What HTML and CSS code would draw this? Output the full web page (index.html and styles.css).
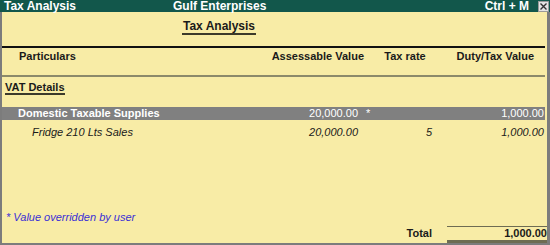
FILE: index.html
```html
<!DOCTYPE html>
<html lang="en">
<head>
  <meta charset="UTF-8">
  <title>Tax Analysis</title>
  <link rel="stylesheet" href="styles.css">
</head>
<body>
  <div class="window">
    <div class="titlebar">
      <span class="title-left">Tax Analysis</span>
      <span class="title-company">Gulf Enterprises</span>
      <span class="title-key">Ctrl + M</span>
      <span class="close-btn">
        <svg width="9" height="9" viewBox="0 0 9 9"><path d="M1.5 1.5 L7.5 7.5 M7.5 1.5 L1.5 7.5" stroke="#333" stroke-width="1.4"/></svg>
      </span>
    </div>
    <div class="report">
      <div class="report-title"><span>Tax Analysis</span></div>

      <div class="grid head-row">
        <div class="c-name">Particulars</div>
        <div class="c-assess-head">Assessable Value</div>
        <div class="c-rate-head">Tax rate</div>
        <div class="c-duty-head">Duty/Tax Value</div>
      </div>

      <div class="section-title"><span>VAT Details</span></div>

      <div class="grid row group-row">
        <div class="c-name">Domestic Taxable Supplies</div>
        <div class="c-assess">20,000.00</div>
        <div class="c-mark">*</div>
        <div class="c-rate"></div>
        <div class="c-duty">1,000.00</div>
      </div>
      <div class="grid row item-row">
        <div class="c-name">Fridge 210 Lts Sales</div>
        <div class="c-assess">20,000.00</div>
        <div class="c-mark"></div>
        <div class="c-rate">5</div>
        <div class="c-duty">1,000.00</div>
      </div>

      <div class="spacer"></div>

      <div class="note">* Value overridden by user</div>
      <div class="grid total-row">
        <div class="c-total-label">Total</div>
        <div class="c-total">1,000.00</div>
      </div>
    </div>
  </div>
</body>
</html>
```

FILE: styles.css
```css
body { margin: 0; background: #f8eca6; font-family: "Liberation Sans", Arial, sans-serif; font-size: 11px; color: #1a1a1a; }
.window { width: 550px; height: 245px; display: flex; flex-direction: column; box-sizing: border-box; }

.titlebar { height: 12px; background: #12574b; color: #fff; font-weight: bold; font-size: 12px; line-height: 12px; display: flex; align-items: center; }
.title-left { padding-left: 4px; width: 169px; }
.title-company { flex: 1; }
.title-key { margin-right: 9px; }
.close-btn { width: 9px; height: 9px; background: #e4e4e4; border: 1px solid #9a9a9a; margin-right: 1px; display: flex; }

.report { flex: 1; display: flex; flex-direction: column; border-left: 2px solid #7c7c7c; border-right: 3px solid #7c7c7c; border-bottom: 2px solid #7c7c7c; padding-right: 2px; }

.report-title { padding-left: 180px; margin-top: 8px; line-height: 13px; font-weight: bold; font-size: 12px; }
.report-title span { display: inline-block; padding: 0 1px 0 1px; border-bottom: 2px solid #3c3a2a; }

.grid { display: grid; grid-template-columns: 1fr 90px 20px 54px 113px; line-height: 13px; }

.head-row { margin-top: 11px; border-top: 2px solid #111; border-bottom: 2px solid #8c8a6a; padding: 2px 0 12px; font-weight: bold; }
.head-row .c-name { padding-left: 17px; }
.c-assess-head { grid-column: 2 / 4; text-align: right; padding-right: 14px; }
.c-rate-head { text-align: center; }
.c-duty-head { text-align: right; padding-right: 11px; }

.section-title { margin-top: 4px; padding-left: 3px; line-height: 12px; font-weight: bold; }
.section-title span { display: inline-block; border-bottom: 2px solid #3c3a2a; }

.row { height: 13px; }
.c-assess, .c-rate, .c-duty { text-align: right; }
.c-duty { padding-right: 1px; }
.c-mark { padding-left: 8px; }

.group-row { margin-top: 12px; background: #808080; color: #fff; }
.group-row .c-name { padding-left: 16px; font-weight: bold; }

.item-row { margin-top: 6px; font-style: italic; }
.item-row .c-name { padding-left: 30px; }

.spacer { flex: 1; }

.note { padding-left: 4px; line-height: 13px; color: #3a2fd6; font-style: italic; margin-bottom: 2px; }

.total-row { font-weight: bold; }
.c-total-label { grid-column: 4; text-align: right; padding-top: 1px; }
.c-total { grid-column: 5; margin-left: 15px; margin-right: -2px; text-align: right; border-top: 1px solid #6e6c52; border-bottom: 3px solid #6e6c52; }
```
